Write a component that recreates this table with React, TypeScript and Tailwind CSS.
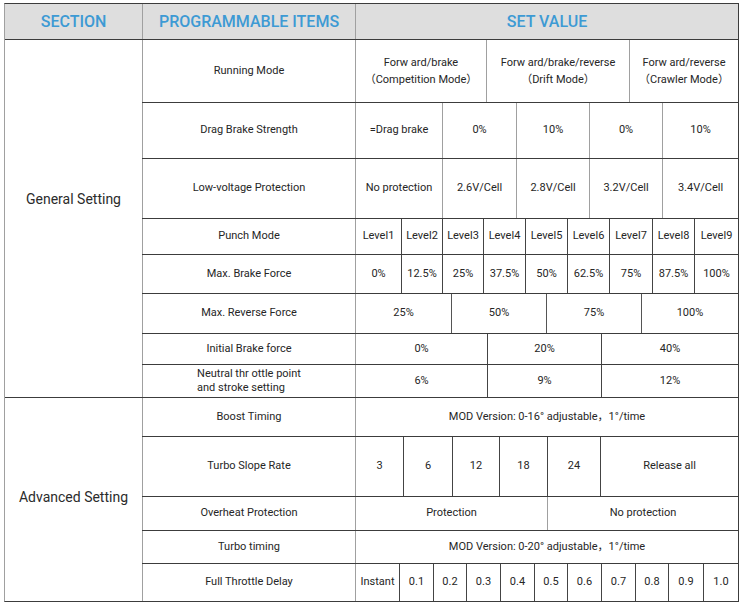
import type { ReactNode } from "react";

type Row = {
  label: ReactNode;
  h: string;
  cols: string;
  vals: ReactNode[];
  line: string;
};

const fw = (a: string, b: string) => (
  <span className="leading-[17px]">
    {a}
    <br />
    {b}
  </span>
);

const general: Row[] = [
  {
    label: "Running Mode",
    h: "h-[63px]",
    cols: "grid-cols-[130px_143px_1fr]",
    line: "border-[#a0a0a0]",
    vals: [
      fw("Forw ard/brake", "（Competition Mode）"),
      fw("Forw ard/brake/reverse", "（Drift Mode）"),
      fw("Forw ard/reverse", "（Crawler Mode）"),
    ],
  },
  {
    label: "Drag Brake Strength",
    h: "h-[56px]",
    cols: "grid-cols-[86px_74px_73px_73px_1fr]",
    line: "border-[#a0a0a0]",
    vals: ["=Drag brake", "0%", "10%", "0%", "10%"],
  },
  {
    label: "Low-voltage Protection",
    h: "h-[60px]",
    cols: "grid-cols-[86px_74px_73px_73px_1fr]",
    line: "border-[#a0a0a0]",
    vals: ["No protection", "2.6V/Cell", "2.8V/Cell", "3.2V/Cell", "3.4V/Cell"],
  },
  {
    label: "Punch Mode",
    h: "h-[36px]",
    cols: "grid-cols-[45px_41px_41px_42px_42px_42px_43px_42px_1fr]",
    line: "border-[#444]",
    vals: ["Level1", "Level2", "Level3", "Level4", "Level5", "Level6", "Level7", "Level8", "Level9"],
  },
  {
    label: "Max. Brake Force",
    h: "h-[39px]",
    cols: "grid-cols-[45px_41px_41px_42px_42px_42px_43px_42px_1fr]",
    line: "border-[#444]",
    vals: ["0%", "12.5%", "25%", "37.5%", "50%", "62.5%", "75%", "87.5%", "100%"],
  },
  {
    label: "Max. Reverse Force",
    h: "h-[40px]",
    cols: "grid-cols-[95px_95px_95px_1fr]",
    line: "border-[#555]",
    vals: ["25%", "50%", "75%", "100%"],
  },
  {
    label: "Initial Brake force",
    h: "h-[31px]",
    cols: "grid-cols-[131px_114px_1fr]",
    line: "border-[#444]",
    vals: ["0%", "20%", "40%"],
  },
  {
    label: (
      <span className="inline-block text-left leading-[14px]">
        Neutral thr ottle point
        <br />
        and stroke setting
      </span>
    ),
    h: "h-[33px]",
    cols: "grid-cols-[131px_114px_1fr]",
    line: "border-[#444]",
    vals: ["6%", "9%", "12%"],
  },
];

const advanced: Row[] = [
  {
    label: "Boost Timing",
    h: "h-[39px]",
    cols: "grid-cols-[1fr]",
    line: "border-[#444]",
    vals: ["MOD Version: 0-16° adjustable，1°/time"],
  },
  {
    label: "Turbo Slope Rate",
    h: "h-[60px]",
    cols: "grid-cols-[47px_49px_47px_48px_53px_1fr]",
    line: "border-[#444]",
    vals: ["3", "6", "12", "18", "24", "Release all"],
  },
  {
    label: "Overheat Protection",
    h: "h-[34px]",
    cols: "grid-cols-[191px_1fr]",
    line: "border-[#a0a0a0]",
    vals: ["Protection", "No protection"],
  },
  {
    label: "Turbo timing",
    h: "h-[33px]",
    cols: "grid-cols-[1fr]",
    line: "border-[#444]",
    vals: ["MOD Version: 0-20° adjustable，1°/time"],
  },
  {
    label: "Full Throttle Delay",
    h: "h-[38px]",
    cols: "grid-cols-[43px_34px_33px_34px_34px_33px_34px_34px_33px_35px_1fr]",
    line: "border-[#444]",
    vals: ["Instant", "0.1", "0.2", "0.3", "0.4", "0.5", "0.6", "0.7", "0.8", "0.9", "1.0"],
  },
];

function SettingRow({ row }: { row: Row }) {
  return (
    <div className={`flex border-t border-[#3c3c3c] ${row.h}`}>
      <div className="w-[213px] shrink-0 border-l border-[#a0a0a0] flex items-center justify-center text-center">
        {row.label}
      </div>
      <div className={`flex-1 grid ${row.cols} border-l border-[#a0a0a0]`}>
        {row.vals.map((v, i) => (
          <div
            key={i}
            className={`flex items-center justify-center text-center whitespace-nowrap ${
              i > 0 ? `border-l ${row.line}` : ""
            }`}
          >
            {v}
          </div>
        ))}
      </div>
    </div>
  );
}

function Section({ title, rows, titlePad }: { title: string; rows: Row[]; titlePad: string }) {
  return (
    <div className="flex">
      <div
        className={`w-[137px] shrink-0 border-t border-[#3c3c3c] flex items-center justify-center text-[14px] text-[#2b2b2b] ${titlePad}`}
      >
        {title}
      </div>
      <div className="flex-1 flex flex-col">
        {rows.map((r, i) => (
          <SettingRow key={i} row={r} />
        ))}
      </div>
    </div>
  );
}

export default function App() {
  return (
    <div className="min-h-screen bg-white pl-[4px] pt-[3px] font-['Roboto','Noto_Sans_CJK_SC',sans-serif] text-[11px] text-[#262626]">
      <div className="w-[735px] border border-t-[#3c3c3c] border-r-[#3c3c3c] border-b-[#3c3c3c] border-l-[#a0a0a0]">
        {/* Header */}
        <div className="flex h-[35px] bg-[#dedede] text-[16px] font-medium text-[#3d9ad4]">
          <div className="w-[137px] shrink-0 flex items-center justify-center">SECTION</div>
          <div className="w-[213px] shrink-0 border-l border-[#a0a0a0] flex items-center justify-center">
            PROGRAMMABLE ITEMS
          </div>
          <div className="flex-1 border-l border-[#a0a0a0] flex items-center justify-center">
            SET VALUE
          </div>
        </div>

        <Section title="General Setting" rows={general} titlePad="pb-[38px]" />
        <Section title="Advanced Setting" rows={advanced} titlePad="pb-[4px]" />
      </div>
    </div>
  );
}
